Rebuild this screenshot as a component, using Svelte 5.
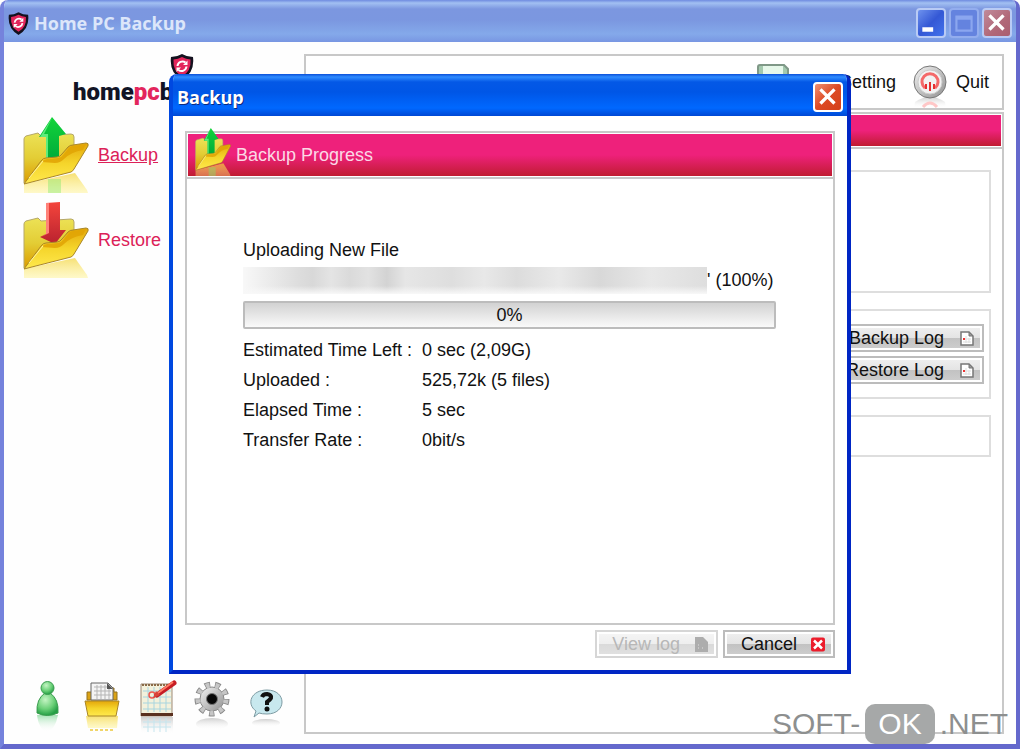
<script lang="ts">
  let progress = $state(0);

  const stats = [
    { label: 'Estimated Time Left :', value: '0 sec (2,09G)' },
    { label: 'Uploaded :', value: '525,72k (5 files)' },
    { label: 'Elapsed Time :', value: '5 sec' },
    { label: 'Transfer Rate :', value: '0bit/s' }
  ];
  const logs = ['Backup Log', 'Restore Log'];
</script>

{#snippet shield()}
  <svg class="shield" viewBox="0 0 24 26" aria-hidden="true">
    <path d="M12 0 Q17 3 23 3 Q25 19 12 26 Q-1 19 1 3 Q7 3 12 0Z" fill="#14121f" />
    <path d="M12 3 Q16 5 20.5 5.500 Q21.500 17 12 22.500 Q2.500 17 3.500 5.500 Q8 5 12 3Z" fill="#e3265c" />
    <path d="M7.500 12 A5 5 0 0 1 15.500 8.500 M16.500 12.500 A5 5 0 0 1 8.500 16" fill="none" stroke="#fff" stroke-width="2" />
    <path d="M17.500 6.500 V11 H13Z M6.500 18 V13.500 H11Z" fill="#fff" />
  </svg>
{/snippet}

{#snippet folder(dir: string)}
  <svg class="folder" viewBox="0 0 66 76" preserveAspectRatio="none" aria-hidden="true">
    <path d="M1 67 L52 56 L64 73 L65 76 H1Z" fill="url(#fade)" />
    {#if dir === 'up'}
      <path d="M25 62 H38 V76 H25Z" fill="#7de86a" opacity=".4" />
    {/if}
    <path d="M1 66 V22 Q1 20 3 19 L15 16 L18 19 L48 17 Q51 17 51 20 V46Z" fill="url(#back)" stroke="#b5a76a" />
    {#if dir === 'up'}
      <path d="M29 0 L43 17 L36 19 V44 H23 V20 L16 20Z" fill="url(#green)" />
      <path d="M29 1 L17 20 H23 V44 H25 V17 H21Z" fill="#5dec7c" />
    {:else}
      <path d="M23 1 L37 0 V28 L43 28 L32 42 L17 35 L23 32Z" fill="url(#red)" />
      <path d="M23 1 H26 V31 L18 35 L23 32Z" fill="#ff8279" />
    {/if}
    <path d="M1 67 L18 44 Q20 41 23 41 L34 40 Q37 40 39 37 L45 30 Q47 28 50 28 L63 26 Q66 26 65 29 L51 52 Q50 54 48 55Z" fill="url(#front)" stroke="#a98628" />
    <path d="M19 45 Q21 42 24 42 L35 41 Q38 41 40 38 L46 31 Q48 29 50 29 L63 27 L60 33 Q48 35 41 42 Q37 46 32 46Z" fill="#e0a303" opacity=".85" />
    <path d="M6 61 L20 44" stroke="#fff3a0" />
  </svg>
{/snippet}

{#snippet page()}
  <svg class="page" viewBox="0 0 14 15" aria-hidden="true">
    <path d="M1 1 H9 L13 5 V14 H1Z" fill="#fff" stroke="#777" stroke-width="1.500" />
    <path d="M9 1 V5 H13Z" fill="#999" stroke="#777" />
    <path d="M3 8 H11 M3 11 H11 M6 5 V12 M9 7 V12" stroke="#ddd" />
    <rect x="3" y="7" width="2" height="2" fill="#e33" />
  </svg>
{/snippet}

<svg class="defs" aria-hidden="true">
  <defs>
    <linearGradient id="back" x1="0" y1="0" x2="0" y2="1">
      <stop offset="0" stop-color="#ece256" />
      <stop offset=".5" stop-color="#e3cd35" />
      <stop offset="1" stop-color="#dc9c00" />
    </linearGradient>
    <linearGradient id="front" x1="0" y1="0" x2="0" y2="1">
      <stop offset="0" stop-color="#e4a70a" />
      <stop offset=".5" stop-color="#f5d52b" />
      <stop offset="1" stop-color="#ffe94e" />
    </linearGradient>
    <linearGradient id="fade" x1="0" y1="0" x2="0" y2="1">
      <stop offset="0" stop-color="#f3d33a" stop-opacity=".7" />
      <stop offset="1" stop-color="#fff07a" stop-opacity=".4" />
    </linearGradient>
    <linearGradient id="green" x1="0" y1="0" x2="0" y2="1">
      <stop offset="0" stop-color="#12d43a" />
      <stop offset="1" stop-color="#00a93a" />
    </linearGradient>
    <linearGradient id="red" x1="0" y1="0" x2="0" y2="1">
      <stop offset="0" stop-color="#f4453c" />
      <stop offset="1" stop-color="#b9222f" />
    </linearGradient>
    <linearGradient id="metal" x1="0" y1="0" x2="1" y2="1">
      <stop offset="0" stop-color="#f4f4f4" />
      <stop offset="1" stop-color="#909090" />
    </linearGradient>
    <radialGradient id="person" cx=".4" cy=".3" r=".7">
      <stop offset="0" stop-color="#c5f5c4" />
      <stop offset=".6" stop-color="#6bd078" />
      <stop offset="1" stop-color="#259f45" />
    </radialGradient>
    <linearGradient id="grey-fade" x1="0" y1="0" x2="0" y2="1">
      <stop offset="0" stop-color="#bbb" stop-opacity=".7" />
      <stop offset="1" stop-color="#fff" stop-opacity="0" />
    </linearGradient>
    <linearGradient id="green-fade" x1="0" y1="0" x2="0" y2="1">
      <stop offset="0" stop-color="#7fd694" stop-opacity=".7" />
      <stop offset="1" stop-color="#fff" stop-opacity="0" />
    </linearGradient>
  </defs>
</svg>

<div class="window">
  <header class="titlebar">
    {@render shield()}
    <h1>Home PC Backup</h1>
    <div class="controls">
      <button class="ctl" aria-label="Minimize">
        <svg viewBox="0 0 24 24"><path d="M4 16 H14 V20 H4Z" fill="#fff" /></svg>
      </button>
      <button class="ctl dim" aria-label="Maximize" disabled>
        <svg viewBox="0 0 24 24"><path d="M5 6 H19 V19 H5Z M5 8 H19" fill="none" stroke="#8ba6ef" stroke-width="2" /></svg>
      </button>
      <button class="ctl muted" aria-label="Close">
        <svg viewBox="0 0 24 24"><path d="M5 5 L18 18 M18 5 L5 18" stroke="#fff" stroke-width="3" /></svg>
      </button>
    </div>
  </header>

  <div class="content">
    <aside>
      <div class="logo">
        {@render shield()}
        <p>home<span>pc</span>b</p>
      </div>
      <nav>
        <a class="current" href="#backup">{@render folder('up')}Backup</a>
        <a href="#restore">{@render folder('down')}Restore</a>
      </nav>
      <div class="tools">
        <button aria-label="Profile">
          <svg viewBox="0 0 40 54">
            <path d="M10 35 H31 Q28 50 20 52 Q12 50 10 35Z" fill="url(#green-fade)" />
            <path d="M10 33 Q9 19 18 13 H23 Q32 19 31 33 Q20 38 10 33Z" fill="url(#person)" stroke="#3c9d50" />
            <circle cx="20.500" cy="8" r="6.500" fill="url(#person)" stroke="#3c9d50" />
          </svg>
        </button>
        <button aria-label="Files">
          <svg viewBox="0 0 40 54">
            <path d="M4 36 H36 L35 48 H6Z" fill="url(#fade)" />
            <path d="M8 50 H33" stroke="#f0d56a" stroke-width="2" stroke-dasharray="3 2" />
            <path d="M5 20 V12 H10 V8 H32 V12 H35 V20Z" fill="#dba315" stroke="#94701e" />
            <path d="M9 20 V3 H26 L31 8 V20Z" fill="#f4f4f4" stroke="#666" />
            <path d="M12 7 H25 M12 11 H29 M12 15 H29 M15 5 V19 M19 5 V19 M23 5 V19 M27 9 V19" stroke="#b5b5b5" />
            <path d="M25 3 V9 H31Z" fill="#555" />
            <path d="M3 21 H37 L34 36 H6Z" fill="url(#front)" stroke="#a98628" />
          </svg>
        </button>
        <button aria-label="Schedule">
          <svg viewBox="0 0 40 54">
            <path d="M4 37 H36 V54 H4Z" fill="url(#grey-fade)" />
            <path d="M6 42 H34 M6 47 H34 M11 38 V52 M17 38 V52 M23 38 V52 M29 38 V52" stroke="#c5e5ee" />
            <path d="M4 4 H35 V36 H4Z" fill="#f3f1dc" stroke="#9b8875" />
            <path d="M5 5 H34" stroke="#8a6a48" stroke-width="2" stroke-dasharray="2 1" />
            <path d="M6 11 H34 M6 17 H34 M6 23 H34 M6 29 H34 M11 7 V32 M17 7 V32 M23 7 V32 M29 7 V32" stroke="#a8d5df" />
            <path d="M4 33 H36 V36 H4Z" fill="#5a301f" />
            <circle cx="15" cy="15" r="3" fill="none" stroke="#ef5850" stroke-width="1.500" />
            <path d="M20 15 L37 3" stroke="#c61d24" stroke-width="5" stroke-linecap="round" />
            <path d="M16 18 L23 15 L19 11Z" fill="#d8443a" />
            <path d="M21 13 L36 2" stroke="#ff7c64" stroke-width="2" />
          </svg>
        </button>
        <button aria-label="Options">
          <svg viewBox="0 0 40 54">
            <ellipse cx="20" cy="44" rx="16" ry="6" fill="url(#grey-fade)" />
            <circle cx="20" cy="19" r="14.500" fill="none" stroke="#8a8a8a" stroke-width="6" stroke-dasharray="5.300 4.823" />
            <circle cx="20" cy="19" r="12" fill="url(#metal)" stroke="#8a8a8a" />
            <circle cx="20" cy="19" r="14" fill="none" stroke="#c6c6c6" stroke-width="5" stroke-dasharray="3.700 6.073" stroke-dashoffset="-.7" />
            <circle cx="20" cy="19" r="5.500" fill="#080808" stroke="#777" />
          </svg>
        </button>
        <button aria-label="Help">
          <svg viewBox="0 0 40 54">
            <ellipse cx="19" cy="43" rx="14" ry="4" fill="url(#grey-fade)" />
            <path d="M20 10 C40 10 40 34 20 34 Q15 34 12 33 L7 37 L9 31 C-1 24 4 10 20 10Z" fill="#c8e8ee" stroke="#7d9ba3" />
            <path d="M15 17 Q16 14 20 14 Q25 15 24 18 Q23 20 20 22 V25" fill="none" stroke="#111" stroke-width="4" />
            <circle cx="20" cy="29" r="2.500" fill="#111" />
          </svg>
        </button>
      </div>
    </aside>

    <main>
      <div class="toolbar">
        <button class="save">
          <svg viewBox="0 0 34 44" aria-hidden="true">
            <path d="M2 3 Q2 1 4 1 H28 L32 5 V36 H2Z" fill="#a3c9ae" stroke="#7f9887" stroke-width="2" />
            <path d="M7 2 H27 V20 H7Z" fill="#e6f8ea" />
          </svg>
          Setting
        </button>
        <button class="quit">
          <svg viewBox="0 0 36 44" aria-hidden="true">
            <path d="M3 38 Q18 28 33 38 L34 44 H2Z" fill="url(#grey-fade)" />
            <path d="M11 43 Q18 35 25 43" fill="none" stroke="#ffc7c7" stroke-width="3" />
            <circle cx="18" cy="18" r="16" fill="url(#metal)" stroke="#777" />
            <circle cx="18" cy="18" r="12" fill="#f2f2f2" stroke="#ccc" />
            <path d="M13 24 A8 8 0 1 1 23 24" fill="none" stroke="#f46a6a" stroke-width="3" />
            <path d="M14 25 V20 M18 18 V27 M22 25 V20" stroke="#e53131" stroke-width="2" />
          </svg>
          Quit
        </button>
      </div>
      <section class="panel">
        <div class="banner"></div>
        <div class="groups">
          <div class="group tall"></div>
          <div class="group logs">
            {#each logs as log (log)}
              <button class="btn">{log}{@render page()}</button>
            {/each}
          </div>
          <div class="group"></div>
        </div>
      </section>
    </main>
  </div>

  <div class="overlay">
    <div class="dialog" role="dialog" aria-labelledby="dialog-title">
      <header class="titlebar active">
        <h2 id="dialog-title">Backup</h2>
        <button class="ctl close" aria-label="Close">
          <svg viewBox="0 0 24 24"><path d="M5 5 L18 18 M18 5 L5 18" stroke="#fff" stroke-width="3" /></svg>
        </button>
      </header>
      <div class="dialog-body">
        <section class="panel">
          <div class="banner large">
            {@render folder('up')}
            <h3>Backup Progress</h3>
          </div>
          <div class="status">
            <p>Uploading New File</p>
            <p class="file"><span class="smear"></span>' (100%)</p>
            <div class="bar" role="progressbar" aria-label="Upload" aria-valuenow={progress} aria-valuemin="0" aria-valuemax="100">
              {progress}%
            </div>
            <dl>
              {#each stats as s (s.label)}
                <dt>{s.label}</dt>
                <dd>{s.value}</dd>
              {/each}
            </dl>
          </div>
        </section>
        <footer>
          <button class="btn view" disabled>
            View log
            <svg class="page" viewBox="0 0 14 15" aria-hidden="true">
              <path d="M1 0 H9 L14 5 V15 H1Z" fill="#777" />
              <path d="M4 8 H5 M4 11 H5 M8 11 H9" stroke="#ccc" />
            </svg>
          </button>
          <button class="btn cancel">
            Cancel
            <svg class="page" viewBox="0 0 14 14" aria-hidden="true">
              <rect width="14" height="14" rx="2" fill="#ec1c2b" />
              <path d="M3 3 L11 11 M11 3 L3 11" stroke="#fff" stroke-width="2.500" />
            </svg>
          </button>
        </footer>
      </div>
    </div>
  </div>

  <div class="watermark">SOFT-<b>OK</b>.NET</div>
</div>

<style>
  :global(body) {
    background: #fff;
  }
  .window {
    position: relative;
    display: flex;
    flex-direction: column;
    box-sizing: border-box;
    min-height: 100vh;
    overflow: hidden;
    border: solid #6468cc;
    border-width: 0 4px 5px;
    border-left-color: #7582dc;
    border-radius: 8px 8px 0 0;
    background: #fefefe;
    color: #111;
    font: 18px/30px 'Liberation Sans', Arial, sans-serif;
  }
  h1,
  h2,
  h3,
  p,
  dl,
  dd {
    margin: 0;
  }
  button {
    padding: 0;
    border: 0;
    background: none;
    color: inherit;
    font: inherit;
  }
  svg {
    display: block;
    flex: none;
  }
  .defs {
    position: absolute;
    width: 0;
    height: 0;
  }
  .titlebar {
    display: flex;
    align-items: center;
    gap: 5px;
    box-sizing: border-box;
    height: 42px;
    margin: 0 -4px;
    padding: 4px 8px 0;
    background: linear-gradient(#6f8be0, #a2c0f2 3px, #7c97e0 9px, #7b97e0 20px, #84a9ea 34px, #7896e2);
    color: #dce6fa;
  }
  .titlebar .shield {
    width: 21px;
    height: 23px;
  }
  .titlebar h1,
  .titlebar h2 {
    flex: 1;
    font: 700 18px/30px 'Open Sans', 'Noto Sans', sans-serif;
  }
  .controls {
    display: flex;
    gap: 3px;
  }
  .ctl {
    box-sizing: border-box;
    width: 30px;
    height: 30px;
    border: 2px solid #b9cbf5;
    border-radius: 4px;
    background: linear-gradient(135deg, #6e92ee, #3458d5 50%, #4373ec);
  }
  .ctl svg {
    width: 26px;
    height: 26px;
  }
  .dim {
    border-color: #93adee;
    background: #6483df;
  }
  .muted {
    background: linear-gradient(135deg, #c08a9a, #b16878 60%, #a95f70);
  }
  .close {
    border-color: #fff;
    background: linear-gradient(135deg, #f09073, #dd4a24 50%, #d4401a);
  }
  .content {
    display: grid;
    grid-template-columns: 300px 1fr;
    flex: 1;
    padding: 12px 12px 10px 0;
  }
  aside {
    display: flex;
    flex-direction: column;
  }
  .logo {
    display: flex;
    flex-direction: column;
    padding-left: 69px;
  }
  .logo .shield {
    width: 24px;
    height: 26px;
    margin-left: 97px;
  }
  .logo p {
    color: #111426;
    font: 900 24px/24px Roboto, sans-serif;
  }
  .logo span {
    color: #e3265c;
  }
  nav {
    display: grid;
    justify-items: start;
    gap: 9px;
    padding: 13px 0 0 19px;
  }
  nav a {
    display: flex;
    align-items: center;
    gap: 9px;
    color: #dc2158;
    text-decoration: none;
  }
  nav a.current {
    text-decoration: underline;
  }
  .folder {
    width: 66px;
    height: 76px;
  }
  .tools {
    display: flex;
    gap: 15px;
    margin-top: auto;
    padding-left: 23px;
  }
  .tools svg {
    width: 40px;
    height: 54px;
  }
  main {
    display: flex;
    flex-direction: column;
    gap: 2px;
  }
  .toolbar,
  .panel {
    box-sizing: border-box;
    border: 2px solid #c8c8c8;
    background: #fff;
  }
  .toolbar {
    display: flex;
    justify-content: flex-end;
    gap: 16px;
    height: 56px;
    padding: 8px 13px 0 0;
  }
  .toolbar button {
    display: flex;
    align-items: flex-start;
    line-height: 36px;
  }
  .toolbar svg {
    height: 44px;
  }
  .save {
    gap: 50px;
  }
  .save svg {
    width: 34px;
  }
  .quit {
    gap: 8px;
  }
  .quit svg {
    width: 36px;
  }
  .panel {
    flex: 1;
  }
  .banner {
    height: 31px;
    border: 1px solid #fff;
    background: linear-gradient(#ee217b 50%, #c01c31);
    box-shadow: 0 2px #c8c8c8;
  }
  .groups {
    display: grid;
    gap: 16px;
    padding: 23px 11px 0;
  }
  .group {
    box-sizing: border-box;
    min-height: 42px;
    border: 2px solid #dedede;
  }
  .tall {
    min-height: 123px;
  }
  .logs {
    display: grid;
    align-content: start;
    justify-items: end;
    gap: 4px;
    min-height: 90px;
    padding: 13px 5px;
  }
  .btn {
    display: flex;
    align-items: center;
    justify-content: flex-end;
    gap: 16px;
    box-sizing: border-box;
    width: 150px;
    height: 28px;
    padding: 0 8px;
    border: 2px solid #bcbcbc;
    background: linear-gradient(#f0f0f0, #e4e4e4 50%, #c2c2c2 50%, #cecece);
    box-shadow: inset 0 0 0 2px #fff;
    color: #111;
    line-height: 24px;
  }
  .page {
    width: 14px;
    height: 15px;
  }
  .overlay {
    position: absolute;
    inset: 0;
    display: grid;
    place-items: center;
  }
  .dialog {
    position: relative;
    top: 2px;
    display: flex;
    flex-direction: column;
    box-sizing: border-box;
    width: min(682px, 100%);
    min-height: 600px;
    overflow: hidden;
    border: solid #0026c4;
    border-width: 0 4px 4px;
    border-left-color: #0048e0;
    border-radius: 8px 8px 0 0;
    background: #fff;
  }
  .active {
    background: linear-gradient(#0a4fd8, #2f8cff 3px, #0458e6 8px, #0056e6 18px, #0068ff 34px, #0048d4);
    color: #fff;
    text-shadow: 1px 1px #0a2a80;
  }
  .dialog-body {
    display: flex;
    flex: 1;
    flex-direction: column;
    gap: 5px;
    padding: 15px 12px 12px;
  }
  .large {
    display: flex;
    gap: 5px;
    height: 42px;
    padding-left: 7px;
  }
  .large .folder {
    width: 36px;
    height: 48px;
    margin-top: -6px;
  }
  .large h3 {
    color: #fbd9e5;
    font-size: 18px;
    font-weight: 400;
    line-height: 42px;
  }
  .status {
    padding: 58px 57px 0 56px;
  }
  .file {
    display: flex;
    align-items: center;
    white-space: nowrap;
  }
  .smear {
    width: 464px;
    height: 27px;
    background:
      linear-gradient(transparent 70%, #f8f8f8),
      linear-gradient(90deg, #f8f8f8, #ddd 12%, #d8d8d8 15%, #e4e4e4 19%, #dadada 23%, #e2e2e2 27%, #d3d3d3 31%, #e6e6e6 35%, #dedede 45%, #e8e8e8 52%, #dcdcdc 59%, #e9e9e9 68%, #d8d8d8 77%, #e8e8e8 88%, #dedede);
  }
  .bar {
    box-sizing: border-box;
    height: 28px;
    margin: 6px 0;
    border: 2px solid #bcbcbc;
    border-radius: 2px;
    background: linear-gradient(#d2d2d2, #fafafa);
    line-height: 24px;
    text-align: center;
  }
  dl {
    display: grid;
    grid-template-columns: 179px 1fr;
  }
  footer {
    display: flex;
    justify-content: flex-end;
    gap: 5px;
  }
  .view {
    width: 123px;
    gap: 14px;
    opacity: 0.6;
    color: #888;
  }
  .cancel {
    width: 112px;
    gap: 14px;
  }
  .watermark {
    position: absolute;
    right: 8px;
    bottom: 0;
    display: flex;
    align-items: center;
    gap: 5px;
    color: #8d8f8f;
    font-size: 30px;
    line-height: 40px;
  }
  .watermark b {
    padding: 0 13px;
    border-radius: 10px;
    background: #a6a8a8;
    color: #fff;
    font-weight: 400;
  }
</style>
